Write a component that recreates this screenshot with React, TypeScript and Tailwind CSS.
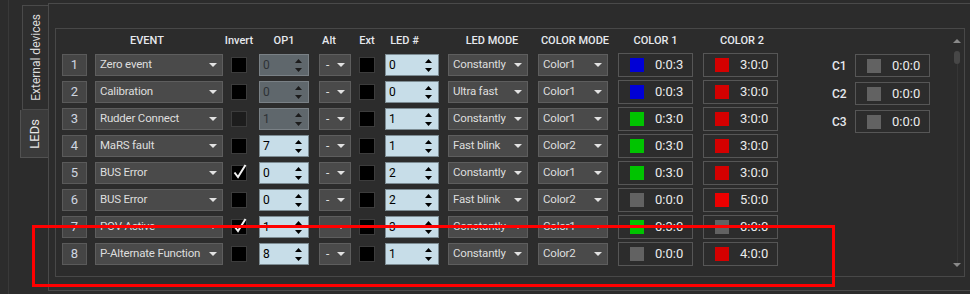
import React from "react";

type Row = {
  n: number;
  event: string;
  inv: boolean;
  invOff?: boolean;
  op: string;
  opOff?: boolean;
  led: string;
  mode: string;
  cmode: string;
  c1: string;
  c1t: string;
  c2: string;
  c2t: string;
};

const BLUE = "#0000d6";
const GREEN = "#00c400";
const RED = "#d40000";
const RED2 = "#ec0000";
const GRAY = "#626262";

const rows: Row[] = [
  { n: 1, event: "Zero event", inv: false, op: "0", opOff: true, led: "0", mode: "Constantly", cmode: "Color1", c1: BLUE, c1t: "0:0:3", c2: RED, c2t: "3:0:0" },
  { n: 2, event: "Calibration", inv: false, op: "0", opOff: true, led: "0", mode: "Ultra fast", cmode: "Color1", c1: BLUE, c1t: "0:0:3", c2: RED, c2t: "3:0:0" },
  { n: 3, event: "Rudder Connect", inv: false, invOff: true, op: "1", opOff: true, led: "1", mode: "Constantly", cmode: "Color1", c1: GREEN, c1t: "0:3:0", c2: RED, c2t: "3:0:0" },
  { n: 4, event: "MaRS fault", inv: false, op: "7", led: "1", mode: "Fast blink", cmode: "Color2", c1: GREEN, c1t: "0:3:0", c2: RED, c2t: "3:0:0" },
  { n: 5, event: "BUS Error", inv: true, op: "0", led: "2", mode: "Constantly", cmode: "Color1", c1: GREEN, c1t: "0:3:0", c2: RED, c2t: "3:0:0" },
  { n: 6, event: "BUS Error", inv: false, op: "0", led: "2", mode: "Fast blink", cmode: "Color2", c1: GRAY, c1t: "0:0:0", c2: RED2, c2t: "5:0:0" },
  { n: 7, event: "POV Active", inv: true, op: "1", led: "3", mode: "Constantly", cmode: "Color1", c1: GREEN, c1t: "0:3:0", c2: GRAY, c2t: "0:0:0" },
  { n: 8, event: "P-Alternate Function", inv: false, op: "8", led: "1", mode: "Constantly", cmode: "Color2", c1: GRAY, c1t: "0:0:0", c2: RED, c2t: "4:0:0" },
];

function Caret() {
  return (
    <svg width="8" height="4" viewBox="0 0 8 4" className="shrink-0">
      <path d="M0 0 L8 0 L4 4 Z" fill="#e2e2e2" />
    </svg>
  );
}

function Dropdown({ text, className }: { text: string; className: string }) {
  return (
    <div className={`flex h-full items-center justify-between border border-[#5e5e5e] bg-[#4a4a4a] pl-[4px] pr-[5px] text-[#dedede] ${className}`}>
      <span className="whitespace-nowrap">{text}</span>
      <Caret />
    </div>
  );
}

function Spin({ value, off, className }: { value: string; off?: boolean; className: string }) {
  const arrow = off ? "#1c1c1c" : "#000";
  return (
    <div
      className={`flex h-full items-center justify-between border pl-[3px] pr-[6px] ${
        off ? "border-[#7a8186] bg-[#5f676c] text-[#2e3236]" : "border-[#7d8c93] bg-[#c7dde8] text-black"
      } ${className}`}
    >
      <span>{value}</span>
      <svg width="7" height="13" viewBox="0 0 7 13">
        <path d="M0 4 L7 4 L3.5 0 Z" fill={arrow} />
        <path d="M0 9 L7 9 L3.5 13 Z" fill={arrow} />
      </svg>
    </div>
  );
}

function Check({ on, off, className }: { on: boolean; off?: boolean; className: string }) {
  return (
    <div className={`relative h-[16px] w-[16px] shrink-0 border border-[#3c3c3c] ${off ? "bg-[#1d1d1d]" : "bg-black"} ${className}`}>
      {on && (
        <svg width="16" height="16" viewBox="0 0 16 16" className="absolute left-0 top-[-3px]">
          <path d="M2.5 9.5 L6 14 L13.5 2" fill="none" stroke="#f2f2f2" strokeWidth="2" />
        </svg>
      )}
    </div>
  );
}

function ColorBox({ color, text, className }: { color: string; text: string; className: string }) {
  return (
    <div className={`flex items-center border border-[#565656] pl-[11px] ${className}`}>
      <div className="h-[14px] w-[14px]" style={{ backgroundColor: color }} />
      <span className="ml-[11px] text-[13px] text-[#ebebeb]">{text}</span>
    </div>
  );
}

export default function App() {
  return (
    <div className="relative flex h-[294px] w-[970px] overflow-hidden bg-[#2c2c2c] font-['Roboto',sans-serif] text-[11px]">
      {/* side tabs */}
      <div className="h-full w-[48px] shrink-0 pl-[8px]">
        <div className="flex h-full flex-col items-end border-l border-[#393939] pt-[5px]">
          <div className="flex h-[105px] w-[26px] items-center justify-center border border-r-0 border-[#4a4a4a] bg-[#2e2e2e]">
            <span className="rotate-180 whitespace-nowrap text-[12px] text-[#dcdcdc] [writing-mode:vertical-rl]">External devices</span>
          </div>
          <div className="flex h-[48px] w-[28px] items-center justify-center border border-r-0 border-t-0 border-[#525252] bg-[#3b3b3b]">
            <span className="rotate-180 text-[13px] text-[#e8e8e8] [writing-mode:vertical-rl]">LEDs</span>
          </div>
        </div>
      </div>

      {/* outer panel */}
      <div className="mt-[3px] h-[288px] flex-1 border-b border-l border-t border-[#4a4a4a] pl-[6px] pt-[24px]">
        <div className="flex h-[249px] w-[910px] border border-[#484848]">
          {/* table */}
          <div className="pl-[6px] pt-[3px]">
            <div className="flex h-[18px] items-center whitespace-nowrap text-[11px] font-medium text-[#e6e9ee]">
              <div className="w-[25px]" />
              <div className="ml-[8px] w-[128px] pr-[24px] text-center">EVENT</div>
              <div className="ml-[0px] w-[32px] text-center">Invert</div>
              <div className="ml-[4px] w-[50px] text-center">OP1</div>
              <div className="ml-[10px] w-[32px] pr-[12px] text-center">Alt</div>
              <div className="ml-[8px] w-[16px] text-center">Ext</div>
              <div className="ml-[10px] w-[54px] pr-[15px] text-center">LED #</div>
              <div className="ml-[9px] w-[80px] pl-[8px] text-center">LED MODE</div>
              <div className="ml-[10px] flex w-[70px] justify-center pl-[4px]">COLOR MODE</div>
              <div className="ml-[10px] w-[75px] text-center">COLOR 1</div>
              <div className="ml-[10px] w-[75px] pl-[3px] text-center">COLOR 2</div>
            </div>
            <div className="mt-[4px] flex flex-col gap-[5px]">
              {rows.map((r) => (
                <div key={r.n} className="flex h-[22px] items-center">
                  <div className="flex h-full w-[25px] items-center justify-center border border-[#5a5a5a] bg-[#454545] text-[13px] text-[#cfd6e0]">
                    {r.n}
                  </div>
                  <Dropdown text={r.event} className="ml-[8px] w-[128px] text-[11.5px] tracking-[-0.2px]" />
                  <Check on={r.inv} off={r.invOff} className="ml-[8px]" />
                  <Spin value={r.op} off={r.opOff} className="ml-[12px] w-[50px] text-[12px]" />
                  <Dropdown text="-" className="ml-[10px] w-[32px] pl-[6px] text-[12px]" />
                  <Check on={false} className="ml-[8px]" />
                  <Spin value={r.led} className="ml-[10px] w-[54px] text-[12px]" />
                  <Dropdown text={r.mode} className="ml-[9px] w-[80px] text-[11.5px] tracking-[-0.2px]" />
                  <Dropdown text={r.cmode} className="ml-[10px] w-[70px] text-[11.5px] tracking-[-0.2px]" />
                  <ColorBox color={r.c1} text={r.c1t} className="ml-[10px] h-[24px] w-[75px]" />
                  <ColorBox color={r.c2} text={r.c2t} className="ml-[10px] h-[24px] w-[75px]" />
                </div>
              ))}
            </div>
          </div>

          {/* global colours */}
          <div className="ml-[54px] mt-[25px] flex flex-col gap-[5px]">
            {["C1", "C2", "C3"].map((c) => (
              <div key={c} className="flex h-[23px] items-center">
                <span className="w-[23px] text-[12px] font-medium text-[#e6e9ee]">{c}</span>
                <ColorBox color={GRAY} text="0:0:0" className="h-[23px] w-[75px]" />
              </div>
            ))}
          </div>

          {/* scrollbar */}
          <div className="ml-auto flex h-full w-[14px] flex-col items-center pb-[9px] pt-[10px]">
            <svg width="8" height="4" viewBox="0 0 8 4">
              <path d="M4 0 L8 4 L0 4 Z" fill="#8a8a8a" />
            </svg>
            <div className="mt-[8px] h-[13px] w-[6px] rounded-full bg-[#474747]" />
            <div className="w-px flex-1 bg-[#363636]" />
            <svg width="8" height="4" viewBox="0 0 8 4">
              <path d="M0 0 L8 0 L4 4 Z" fill="#8a8a8a" />
            </svg>
          </div>
        </div>
      </div>

      {/* highlight */}
      <div className="absolute left-[32px] top-[225px] h-[62px] w-[803px] border-[3px] border-[#ff0000]" />
    </div>
  );
}
